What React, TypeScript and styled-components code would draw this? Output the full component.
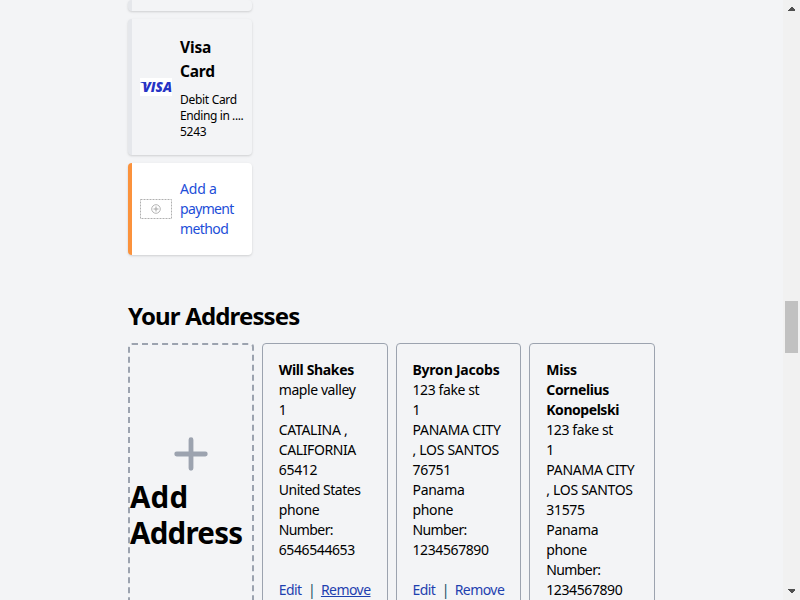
import React from "react";
import styled, { createGlobalStyle } from "styled-components";

const Global = createGlobalStyle`
  * { box-sizing: border-box; }
  html, body { margin: 0; padding: 0; }
  body {
    width: 800px; height: 600px; overflow: hidden;
    background: #f3f4f6; color: #000;
    font-family: "Noto Sans", "Open Sans", sans-serif;
  }
`;

const Screen = styled.div`
  display: flex;
  width: 800px;
  height: 600px;
  overflow: hidden;
`;

const Page = styled.main`
  flex: 1;
  height: 600px;
  padding: 0 128px;
  overflow: hidden;
`;

const Payments = styled.div`
  display: flex;
  flex-direction: column;
  gap: 8px;
  width: 124px;
`;

const PaymentCard = styled.section<{ $height: number; $active?: boolean }>`
  display: flex;
  align-items: center;
  gap: 8px;
  flex: none;
  height: ${(p) => p.$height}px;
  padding: 0 8px;
  border-left: 4px solid ${(p) => (p.$active ? "#fb923c" : "#e5e7eb")};
  border-radius: 4px;
  background: ${(p) => (p.$active ? "#fff" : "#f3f4f6")};
  box-shadow: 0 1px 3px rgba(0, 0, 0, 0.1), 0 1px 2px rgba(0, 0, 0, 0.06);
`;

const Logo = styled.svg`
  display: block;
  flex: none;
`;

const PaymentText = styled.div`
  display: flex;
  flex-direction: column;
`;

const Line = styled.span<{ $track?: number }>`
  display: block;
  white-space: nowrap;
  letter-spacing: ${(p) => p.$track ?? 0}px;
`;

const CardName = styled.div`
  margin-bottom: 9px;
  font-size: 15.5px;
  font-weight: 700;
  line-height: 24px;
`;

const CardDetail = styled.div`
  font-size: 12px;
  line-height: 16px;
`;

const AddMethod = styled.a`
  color: #1d4ed8;
  font-size: 14px;
  line-height: 20px;
`;

const Heading = styled.h2`
  margin: 43px 0 9px;
  font-size: 24px;
  line-height: 36px;
  font-weight: 700;
  white-space: nowrap;
  letter-spacing: -0.85px;
`;

const Addresses = styled.div`
  display: grid;
  grid-template-columns: repeat(4, minmax(0, 1fr));
  gap: 8px;
  height: 342px;
`;

const AddAddress = styled.section`
  display: flex;
  flex-direction: column;
  justify-content: center;
  gap: 1px;
  padding-bottom: 47px;
  border: 2px dashed #9ca3af;
  border-radius: 4px;
`;

const PlusIcon = styled.svg`
  display: block;
  align-self: center;
`;

const AddTitle = styled.h1`
  margin: 0;
  font-size: 29.5px;
  line-height: 36px;
  font-weight: 700;
`;

const AddressCard = styled.section`
  padding: 16px;
  border: 1px solid #9ca3af;
  border-radius: 4px;
  font-size: 14px;
  line-height: 20px;
`;

const Name = styled.div`
  font-weight: 700;
`;

const Actions = styled.div`
  display: flex;
  margin-top: 20px;
  white-space: nowrap;
`;

const Action = styled.a<{ $underline?: boolean; $width: number }>`
  width: ${(p) => p.$width}px;
  color: #1e40af;
  letter-spacing: -0.55px;
  text-decoration: ${(p) => (p.$underline ? "underline" : "none")};
`;

const Divider = styled.span`
  width: 20px;
  padding-left: 1px;
  text-align: center;
  color: #164e63;
`;

const Scrollbar = styled.aside`
  display: flex;
  flex-direction: column;
  align-items: center;
  width: 17px;
  height: 600px;
  background: #f1f1f1;
`;

const Thumb = styled.div`
  width: 13px;
  height: 52px;
  margin: 284px 0 230px;
  background: #c1c1c1;
`;

const ScrollArrow = styled.svg`
  display: block;
  flex: none;
`;

type T = [string, number];
interface Address {
  name: T[];
  lines: T[];
  hovered?: boolean;
}

const addresses: Address[] = [
  {
    name: [["Will Shakes", -0.35]],
    lines: [
      ["maple valley", -0.42], ["1", 0], ["CATALINA ,", -0.3], ["CALIFORNIA", -0.4], ["65412", -0.3],
      ["United States", -0.48], ["phone", -0.35], ["Number:", -0.6], ["6546544653", -0.4],
    ],
    hovered: true,
  },
  {
    name: [["Byron Jacobs", -0.22]],
    lines: [
      ["123 fake st", -0.4], ["1", 0], ["PANAMA CITY", -0.25], [", LOS SANTOS", -0.3], ["76751", -0.3],
      ["Panama", -0.3], ["phone", -0.35], ["Number:", -0.6], ["1234567890", -0.4],
    ],
  },
  {
    name: [["Miss", -0.2], ["Cornelius", -0.35], ["Konopelski", -0.45]],
    lines: [
      ["123 fake st", -0.4], ["1", 0], ["PANAMA CITY", -0.25], [", LOS SANTOS", -0.3], ["31575", -0.3],
      ["Panama", -0.3], ["phone", -0.35], ["Number:", -0.6], ["1234567890", -0.4],
    ],
  },
];

const Lines = ({ items }: { items: T[] }) => (
  <>
    {items.map(([text, track]) => (
      <Line key={text} $track={track}>{text}</Line>
    ))}
  </>
);

export default function App() {
  return (
    <Screen>
      <Global />
      <Page>
        <Payments>
          <PaymentCard $height={11} />
          <PaymentCard $height={136}>
            <Logo width="32" height="18" viewBox="0 0 32 18">
              <rect width="32" height="18" fill="#fff" />
              <path d="M0.5 4H5.6L7 8.6C5.8 6.2 3.8 4.9 0.5 4.5Z" fill="#2634c5" />
              <text x="2.5" y="14" textLength="29.5" lengthAdjust="spacingAndGlyphs" fill="#2634c5" fontFamily="Open Sans" fontSize="13.5" fontWeight="800" fontStyle="italic">VISA</text>
            </Logo>
            <PaymentText>
              <CardName><Lines items={[["Visa", -0.15], ["Card", -0.2]]} /></CardName>
              <CardDetail><Lines items={[["Debit Card", -0.3], ["Ending in ....", -0.4], ["5243", -0.3]]} /></CardDetail>
            </PaymentText>
          </PaymentCard>
          <PaymentCard $height={92} $active>
            <Logo width="32" height="20" viewBox="0 0 32 20" fill="none">
              <rect x="0.5" y="0.5" width="31" height="19" stroke="#b0b0b0" strokeDasharray="2 1" />
              <circle cx="16" cy="10" r="4.3" stroke="#b5b5b5" />
              <path d="M13.5 10H18.5M16 7.5V12.5" stroke="#a5a5a5" />
            </Logo>
            <AddMethod><Lines items={[["Add a", -0.2], ["payment", -0.65], ["method", -0.6]]} /></AddMethod>
          </PaymentCard>
        </Payments>
        <Heading>Your Addresses</Heading>
        <Addresses>
          <AddAddress>
            <PlusIcon width="48" height="48" viewBox="0 0 48 48" fill="none" stroke="#9ca3af" strokeWidth="4.8" strokeLinecap="round">
              <path d="M24 9.7V38.3M9.7 24H38.3" />
            </PlusIcon>
            <AddTitle><Lines items={[["Add", 0.2], ["Address", -0.75]]} /></AddTitle>
          </AddAddress>
          {addresses.map((a) => (
            <AddressCard key={a.name[0][0]}>
              <Name><Lines items={a.name} /></Name>
              <Lines items={a.lines} />
              <Actions>
                <Action $width={23}>Edit</Action>
                <Divider>|</Divider>
                <Action $width={50} $underline={a.hovered}>Remove</Action>
              </Actions>
            </AddressCard>
          ))}
        </Addresses>
      </Page>
      <Scrollbar>
        <ScrollArrow width="17" height="17" viewBox="0 0 17 17" shapeRendering="crispEdges">
          <path d="M5 11V10L8.5 6.5L12 10V11Z" fill="#505050" />
        </ScrollArrow>
        <Thumb />
        <ScrollArrow width="17" height="17" viewBox="0 0 17 17" shapeRendering="crispEdges">
          <path d="M5 6V7L8.5 10.5L12 7V6Z" fill="#505050" />
        </ScrollArrow>
      </Scrollbar>
    </Screen>
  );
}
